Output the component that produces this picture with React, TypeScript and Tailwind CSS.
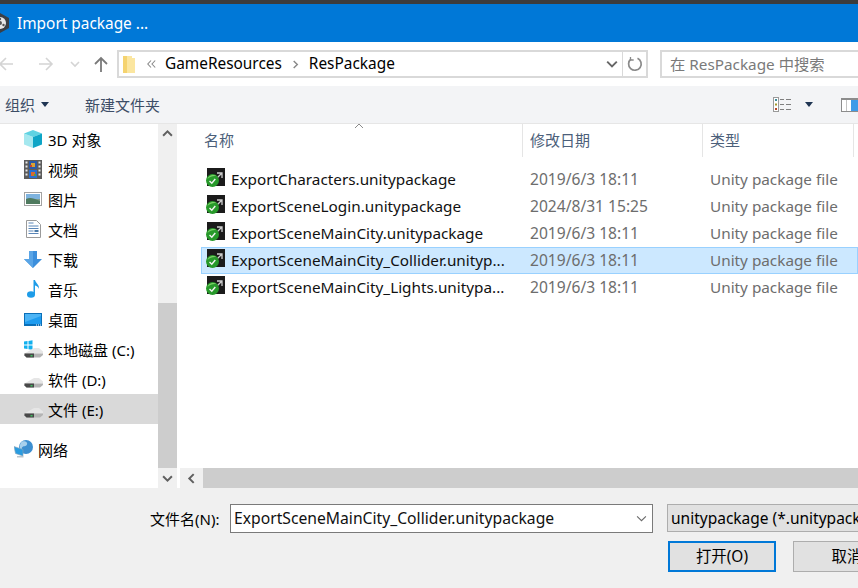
const FONT = "font-['Noto_Sans','Noto_Sans_CJK_SC',sans-serif]"

function AppIcon() {
  return (
    <svg width="22" height="22" viewBox="0 0 22 22" className="-ml-[11px] shrink-0">
      <path d="M11 1 L20 6 V16 L11 21 L2 16 V6 Z" fill="#3a3f45" />
      <circle cx="11" cy="11" r="6" fill="#e8e8e8" />
      <circle cx="11" cy="11" r="2" fill="#555" />
      <circle cx="11" cy="7" r="1.2" fill="#555" />
      <circle cx="7.5" cy="13" r="1.2" fill="#555" />
      <circle cx="14.5" cy="13" r="1.2" fill="#555" />
    </svg>
  )
}

function ArrowLeft({ color }: { color: string }) {
  return (
    <svg width="16" height="14" viewBox="0 0 16 14" fill="none" stroke={color} strokeWidth="1.6">
      <path d="M15 7H2M8 1L2 7l6 6" />
    </svg>
  )
}

function ArrowRight({ color }: { color: string }) {
  return (
    <svg width="16" height="14" viewBox="0 0 16 14" fill="none" stroke={color} strokeWidth="1.6">
      <path d="M1 7h13M8 1l6 6-6 6" />
    </svg>
  )
}

function Chevron({ dir, color, size = 10, width = 1.6 }: { dir: 'up' | 'down' | 'left' | 'right'; color: string; size?: number; width?: number }) {
  const d = {
    up: 'M1 7l4-4 4 4',
    down: 'M1 3l4 4 4-4',
    left: 'M7 1L3 5l4 4',
    right: 'M3 1l4 4-4 4',
  }[dir]
  return (
    <svg width={size} height={size} viewBox="0 0 10 10" fill="none" stroke={color} strokeWidth={width}>
      <path d={d} />
    </svg>
  )
}

function DoubleLeft() {
  return (
    <svg width="9" height="8" viewBox="0 0 9 8" fill="none" stroke="#8a8a8a" strokeWidth="1.1" className="shrink-0">
      <path d="M4 .5L.8 4 4 7.500M8.200 .5L5 4l3.200 3.500" />
    </svg>
  )
}

function Caret({ color = '#1f3553' }: { color?: string }) {
  return (
    <svg width="8" height="5" viewBox="0 0 8 5">
      <path d="M0 0h8L4 5z" fill={color} />
    </svg>
  )
}

function UpArrow() {
  return (
    <svg width="14" height="16" viewBox="0 0 14 16" fill="none" stroke="#7a7a7a" strokeWidth="1.8">
      <path d="M7 16V2M1 8l6-6 6 6" />
    </svg>
  )
}

function FolderIcon() {
  return (
    <svg width="13" height="17" viewBox="0 0 13 17" className="shrink-0">
      <path d="M0 0h9v2h3v15H0z" fill="#fbe6a0" />
      <path d="M0 0h4v17H0z" fill="#f5d36f" />
    </svg>
  )
}

function RefreshIcon() {
  return (
    <svg width="16" height="16" viewBox="0 0 16 16" fill="none" stroke="#8a8a8a" strokeWidth="1.7">
      <path d="M10.500 2.200A6.300 6.300 0 1 1 4 3" />
      <path d="M3.500 1v3h3.200" strokeWidth="1.3" />
    </svg>
  )
}

function ViewIcon() {
  return (
    <svg width="18" height="15" viewBox="0 0 18 15">
      <rect x="0.500" y="0.500" width="5" height="14" fill="#fff" stroke="#9a9a9a" />
      <rect x="2" y="2" width="2" height="2" fill="#3d8c99" />
      <rect x="2" y="6.500" width="2" height="2" fill="#a59a2f" />
      <rect x="2" y="11" width="2" height="2" fill="#b5482a" />
      <path d="M7 2.500h4M13 2.500h5M7 7.500h4M13 7.500h5M7 12.500h4M13 12.500h5" stroke="#7f7f7f" />
    </svg>
  )
}

function PaneIcon() {
  return (
    <svg width="17" height="14" viewBox="0 0 17 14" className="shrink-0">
      <rect x="0.500" y="1" width="16.500" height="12.500" fill="#fff" stroke="#8c8c8c" />
      <rect x="0" y="0" width="17" height="2" fill="#8c8c8c" />
      <path d="M5.500 2v11" stroke="#c4c4c4" />
      <rect x="10" y="2" width="7" height="11" fill="#3f9be8" />
    </svg>
  )
}

function CubeIcon() {
  return (
    <svg width="18" height="18" viewBox="0 0 18 18">
      <path d="M0 3.500L9 7v11L0 14.500z" fill="#a5e8ef" />
      <path d="M9 0l9 3.500L9 7 0 3.500z" fill="#5fd3e2" />
      <path d="M9 7l9-3.500v11L9 18z" fill="#0ea5c6" />
    </svg>
  )
}

function FilmIcon() {
  return (
    <svg width="18" height="19" viewBox="0 0 18 19">
      <rect width="18" height="19" fill="#5c5c5c" />
      <path d="M1.500 1.500h2v2h-2zM1.500 5.500h2v2h-2zM1.500 9.500h2v2h-2zM1.500 13.500h2v2h-2zM14.500 1.500h2v2h-2zM14.500 5.500h2v2h-2zM14.500 9.500h2v2h-2zM14.500 13.500h2v2h-2z" fill="#e8e8e8" />
      <rect x="5" y="1" width="8" height="8" fill="#2b5aa8" />
      <rect x="5" y="10" width="8" height="8" fill="#2b6fd0" />
      <rect x="7" y="3" width="4" height="4" fill="#d9a233" />
      <rect x="6" y="5" width="2" height="2" fill="#c9402f" />
      <rect x="7" y="12" width="4" height="4" fill="#d86a2f" />
      <rect x="10" y="14" width="2" height="2" fill="#55a04a" />
    </svg>
  )
}

function PictureIcon() {
  return (
    <svg width="18" height="14" viewBox="0 0 18 14">
      <rect x="0.500" y="0.500" width="17" height="13" fill="#fff" stroke="#a3a3a3" />
      <rect x="2" y="2" width="14" height="5" fill="#7eb3df" />
      <rect x="2" y="7" width="14" height="5" fill="#7f9b8a" />
      <path d="M2 7c4-2 7-1 14 2v3H2z" fill="#4f7a5f" />
    </svg>
  )
}

function DocIcon() {
  return (
    <svg width="15" height="18" viewBox="0 0 15 18" fill="none">
      <path d="M.500.500h10l4 4v13H.500z" fill="#fff" stroke="#9a9a9a" />
      <path d="M2.500 3h5M2.500 6h10M2.500 8.500h10M2.500 11h5M2.500 13.500h10" stroke="#5a86b8" />
      <rect x="8.500" y="10" width="4" height="2" fill="#4a7aa8" />
    </svg>
  )
}

function DownloadIcon() {
  return (
    <svg width="18" height="17" viewBox="0 0 18 17">
      <path d="M5 0h8v8h5l-9 9-9-9h5z" fill="#3c8fdc" />
      <path d="M5 0h4v17l-9-9h5z" fill="#5aa5e6" />
    </svg>
  )
}

function MusicIcon() {
  return (
    <svg width="13" height="18" viewBox="0 0 13 18" fill="#1e9ce8">
      <ellipse cx="4" cy="14.500" rx="4" ry="3.200" />
      <path d="M6.500 0h1.500c.5 3 4.500 4.500 4 9-.5-2-3-3.500-4-3.500V14.500H6.500z" />
    </svg>
  )
}

function DesktopIcon() {
  return (
    <svg width="18" height="13" viewBox="0 0 18 13">
      <rect width="18" height="13" fill="#0a6fb8" />
      <rect x="1" y="1" width="16" height="10" fill="#1e9cf0" />
      <path d="M1 1h16v2L1 9z" fill="#4cb4f5" />
      <path d="M12 12h1M14 12h1M16 12h1" stroke="#fff" />
    </svg>
  )
}

function DriveIcon({ windows }: { windows?: boolean }) {
  return (
    <svg width="19" height="18" viewBox="0 0 19 18" className="shrink-0">
      {windows && <path d="M0 1.500l3.500-.5v3.500H0zM4.500 1l4-.8v4.300h-4zM0 5.500h3.500V9L0 8.500zM4.500 5.500h4v4.300l-4-.6z" fill="#12b0ee" />}
      <path d="M.5 13.500L10 8h5l4 3.500v2z" fill="#e6e6e6" />
      <path d="M.5 13.500H19V15l-3 2.500H2.500L.5 15.500z" fill="#b4b4b4" />
      <path d="M.5 13.500H10v4H2.500L.5 15.500z" fill="#484848" />
      <rect x="6.500" y="15" width="2" height="1.500" fill="#3fbf5f" />
    </svg>
  )
}

function NetworkIcon() {
  return (
    <svg width="19" height="18" viewBox="0 0 19 18" className="shrink-0">
      <circle cx="12" cy="7" r="7" fill="#3d8fd0" />
      <path d="M8 1.500c3-1 6 .5 5 3s-4 1-5 3 1 3 0 4.500c-3-2-3-8 0-10.500z" fill="#a8d0ec" />
      <path d="M0 6.500l9 3v6.500L1.500 13.500z" fill="#2a9ce0" stroke="#8ba5b8" strokeWidth="0.600" />
      <path d="M3 16h6.500v1.500H3z" fill="#b9c4cc" />
    </svg>
  )
}

function UnityFileIcon() {
  return (
    <svg width="20" height="19" viewBox="0 0 20 19" className="shrink-0 -translate-y-[2px]">
      <rect x="1" y="0" width="18" height="18" fill="#1b1b1b" />
      <path d="M11 5h5v5M16 5l-6 6" fill="none" stroke="#cfcfcf" strokeWidth="1.300" />
      <circle cx="6.500" cy="12.500" r="6.500" fill="#27992a" />
      <path d="M1.500 11c1-4 6-5 9-3-3-.5-7 .5-9 3z" fill="#7ed36a" />
      <path d="M3.500 13l2.300 2.300 3.500-4.300" fill="none" stroke="#f2f2f2" strokeWidth="1.400" />
    </svg>
  )
}

const navItems = [
  { icon: <CubeIcon />, label: '3D 对象' },
  { icon: <FilmIcon />, label: '视频' },
  { icon: <PictureIcon />, label: '图片' },
  { icon: <DocIcon />, label: '文档' },
  { icon: <DownloadIcon />, label: '下载' },
  { icon: <MusicIcon />, label: '音乐' },
  { icon: <DesktopIcon />, label: '桌面' },
  { icon: <DriveIcon windows />, label: '本地磁盘 (C:)' },
  { icon: <DriveIcon />, label: '软件 (D:)' },
  { icon: <DriveIcon />, label: '文件 (E:)', selected: true },
]

const files = [
  { name: 'ExportCharacters.unitypackage', date: '2019/6/3 18:11' },
  { name: 'ExportSceneLogin.unitypackage', date: '2024/8/31 15:25' },
  { name: 'ExportSceneMainCity.unitypackage', date: '2019/6/3 18:11' },
  { name: 'ExportSceneMainCity_Collider.unityp...', date: '2019/6/3 18:11', selected: true },
  { name: 'ExportSceneMainCity_Lights.unitypa...', date: '2019/6/3 18:11' },
]

export default function App() {
  return (
    <div className={`flex h-[588px] w-[858px] flex-col overflow-hidden bg-white text-[15px] text-black ${FONT}`}>
      {/* Strip of the window behind */}
      <div className="h-1 shrink-0 bg-[#3c3c3c]" />

      {/* Title bar */}
      <div className="flex h-[38px] shrink-0 items-center gap-[6px] bg-[#0078d7] text-[15.400px] text-white">
        <AppIcon />
        <span className="pt-[2px]">Import package ...</span>
      </div>

      {/* Nav row */}
      <div className="flex h-11 shrink-0 items-center">
        <div className="flex h-7 w-[117px] shrink-0 items-center">
          <div className="-ml-[2px] w-[40px] shrink-0"><ArrowLeft color="#d4d4d4" /></div>
          <div className="w-[32px] shrink-0"><ArrowRight color="#d4d4d4" /></div>
          <div className="w-[24px] shrink-0"><Chevron dir="down" color="#d4d4d4" size={10} /></div>
          <UpArrow />
        </div>
        <div className="flex h-7 w-[531px] shrink-0 items-center border-2 border-[#d9d9d9] pl-[4px] text-[15.400px]">
          <FolderIcon />
          <span className="ml-[11px]"><DoubleLeft /></span>
          <span className="ml-[9px]">GameResources</span>
          <span className="mx-[9px]"><Chevron dir="right" color="#888" size={9} /></span>
          <span>ResPackage</span>
          <span className="ml-auto mr-[4px]"><Chevron dir="down" color="#666" size={12} /></span>
          <div className="flex h-full w-[24px] shrink-0 items-center justify-center border-l border-[#d9d9d9]">
            <RefreshIcon />
          </div>
        </div>
        <div className="ml-3 flex h-7 w-[210px] shrink-0 items-center border-2 border-r-0 border-[#d9d9d9] pl-2 text-[15.300px] text-[#7a7a7a]">
          在 ResPackage 中搜索
        </div>
      </div>

      {/* Toolbar */}
      <div className="flex h-[38px] shrink-0 items-center border-b border-[#e6e6e6] bg-[#f3f4f6] text-[#3c4d66]">
        <span className="ml-[5px] pt-[2px]">组织</span>
        <span className="ml-[6px]"><Caret /></span>
        <span className="ml-[36px] pt-[2px]">新建文件夹</span>
        <span className="ml-auto"><ViewIcon /></span>
        <span className="ml-[14px]"><Caret /></span>
        <span className="ml-[28px]"><PaneIcon /></span>
      </div>

      {/* Main area */}
      <div className="flex min-h-0 flex-1">
        {/* Sidebar */}
        <div className="flex w-[158px] shrink-0 flex-col">
          {navItems.map((item) => (
            <div key={item.label} className={`flex h-[30px] items-center ${item.selected ? 'bg-[#d9d9d9]' : ''}`}>
              <div className="ml-[24px] mr-[6px] flex w-[18px] shrink-0 justify-center">{item.icon}</div>
              <span className="pt-[2px]">{item.label}</span>
            </div>
          ))}
          <div className="mt-[10px] flex h-[30px] items-center">
            <div className="ml-[14px] mr-[5px]"><NetworkIcon /></div>
            <span className="pt-[2px]">网络</span>
          </div>
        </div>

        {/* Sidebar scrollbar */}
        <div className="flex w-[19px] shrink-0 flex-col bg-[#f0f0f0]">
          <div className="flex h-[19px] items-center justify-center"><Chevron dir="up" color="#606060" size={11} width={1.8} /></div>
          <div className="mt-[160px] flex-1 bg-[#cdcdcd]" />
          <div className="flex h-5 items-center justify-center"><Chevron dir="down" color="#606060" size={11} width={1.8} /></div>
        </div>
        <div className="w-[3px] shrink-0 bg-white" />

        {/* File list */}
        <div className="flex min-w-0 flex-1 flex-col">
          <div className="relative flex h-[33px] shrink-0 items-center text-[#4c607a]">
            <span className="w-[342px] shrink-0 pl-[24px]">名称</span>
            <span className="h-full w-[180px] shrink-0 border-l border-[#e5e5e5] pl-[7px] leading-[33px]">修改日期</span>
            <span className="h-full w-[151px] shrink-0 border-l border-[#e5e5e5] pl-[7px] leading-[33px]">类型</span>
            <span className="h-full border-l border-[#e5e5e5]" />
            <span className="absolute left-[174px] top-[-3px]"><Chevron dir="up" color="#8a8a8a" size={10} width={1} /></span>
          </div>
          <div className="flex flex-1 flex-col pl-[21px] pt-[9px] text-[15.300px]">
            {files.map((file) => (
              <div
                key={file.name}
                className={`flex h-[27px] items-center border pl-[4px] ${file.selected ? 'border-[#99d1ff] bg-[#cce8ff]' : 'border-transparent'}`}
              >
                <UnityFileIcon />
                <span className="ml-[5px] w-[299px] shrink-0 whitespace-nowrap text-[#111]">{file.name}</span>
                <span className="w-[180px] shrink-0 whitespace-nowrap text-[15.600px] text-[#6d6d6d]">{file.date}</span>
                <span className="whitespace-nowrap text-[#6d6d6d]">Unity package file</span>
              </div>
            ))}
          </div>
          <div className="flex h-5 shrink-0 bg-[#f0f0f0]">
            <div className="flex w-[23px] shrink-0 items-center justify-center"><Chevron dir="left" color="#606060" size={11} width={1.8} /></div>
            <div className="flex-1 bg-[#cdcdcd]" />
          </div>
        </div>
      </div>

      {/* Footer */}
      <div className="flex h-[100px] shrink-0 flex-col bg-[#f0f0f0] pt-[16px]">
        <div className="flex h-7 items-center">
          <span className="ml-[150px] w-[80px] shrink-0 whitespace-nowrap pt-[2px]">文件名(N):</span>
          <div className="flex h-[29px] w-[423px] shrink-0 items-center border border-[#7a7a7a] bg-white pl-[3px] text-[15.700px] text-[#111]">
            <span className="whitespace-nowrap pt-[2px]">ExportSceneMainCity_Collider.unitypackage</span>
            <span className="ml-auto mr-[5px]"><Chevron dir="down" color="#6a6a6a" size={11} width={1} /></span>
          </div>
          <div className="ml-[14px] flex h-[28px] w-[250px] shrink-0 items-center overflow-hidden border border-[#adadad] bg-[#e1e1e1] pl-[3px] text-[15.500px]">
            <span className="whitespace-nowrap pt-[2px]">unitypackage (*.unitypackage)</span>
          </div>
        </div>
        <div className="mt-[9px] flex text-[15.400px]">
          <button className="ml-[668px] h-[31px] w-[108px] shrink-0 border-2 border-[#0078d7] bg-[#e1e1e1]">打开(O)</button>
          <button className="ml-[17px] h-[31px] w-[108px] shrink-0 border border-[#adadad] bg-[#e1e1e1]">取消</button>
        </div>
      </div>
    </div>
  )
}
